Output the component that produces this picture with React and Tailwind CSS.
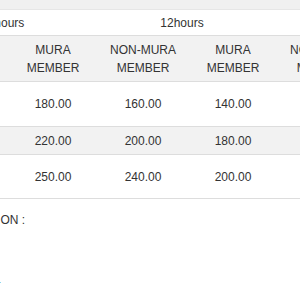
import React from "react";

const cols = [
  { top: "MURA", bottom: "MEMBER" },
  { top: "NON-MURA", bottom: "MEMBER" },
  { top: "MURA", bottom: "MEMBER" },
  { top: "NON-MURA", bottom: "MEMBER" },
];

const rows = [
  { label: "Weekday (Mon - Thu)", vals: ["180.00", "160.00", "140.00", "120.00"], h: "h-[45px]", bg: "bg-white" },
  { label: "Friday", vals: ["220.00", "200.00", "180.00", "160.00"], h: "h-[28px]", bg: "bg-[#f2f2f2]" },
  { label: "Weekend & Public Holiday", vals: ["250.00", "240.00", "200.00", "180.00"], h: "h-[44px]", bg: "bg-white" },
];

export default function App() {
  return (
    <div className="w-[300px] h-[300px] overflow-hidden bg-white font-['Liberation_Sans',Arial,sans-serif] text-[12px] text-[#333]">
      <div className="h-[9px] bg-[#f0f0f0]" />

      <div className="-ml-[100px] w-[470px]">
        {/* group header */}
        <div className="flex h-[27px] items-center border-t border-b border-t-[#e6e6e6] border-b-[#dddddd]">
          <div className="w-[18px] shrink-0" />
          <div className="w-[176px] shrink-0 text-center">6hours</div>
          <div className="w-[176px] shrink-0 text-center">12hours</div>
        </div>

        {/* member header */}
        <div className="flex h-[46px] items-center bg-[#f2f2f2] border-b border-[#dddddd] leading-[18px] pt-[1px]">
          <div className="w-[108px] shrink-0" />
          {cols.map((c, i) => (
            <div key={i} className="w-[90px] shrink-0 text-center">
              {c.top}
              <br />
              {c.bottom}
            </div>
          ))}
        </div>

        {rows.map((r, i) => (
          <div key={i} className={`flex items-center border-b border-[#dddddd] ${r.h} ${r.bg}`}>
            <div className="w-[108px] shrink-0 px-2 text-left">{r.label}</div>
            {r.vals.map((v, j) => (
              <div key={j} className="w-[90px] shrink-0 text-center">{v}</div>
            ))}
          </div>
        ))}
      </div>

      <div className="-ml-[42px] mt-[14px] leading-[14px]">LOCATION :</div>

      <div className="mt-[55px] h-[1px] w-[1px] bg-[#8fd8f0]" />
    </div>
  );
}
